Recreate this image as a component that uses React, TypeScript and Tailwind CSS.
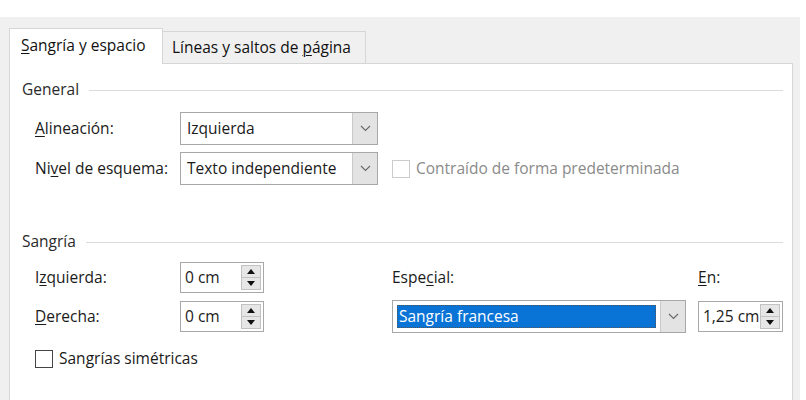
import React from "react";

// Small accelerator-key underline, like Win32 dialogs
const U = ({ children }: { children: React.ReactNode }) => (
  <span className="underline decoration-1 underline-offset-[2px]">{children}</span>
);

const Chevron = () => (
  <svg width="11" height="7" viewBox="0 0 11 7" fill="none">
    <path d="M1 1l4.5 4.5L10 1" stroke="#6b6b6b" strokeWidth="1.2" />
  </svg>
);

const SectionHeader = ({ title }: { title: string }) => (
  <div className="flex h-[20px] items-center">
    <span className="text-[#2a2a2a]">{title}</span>
    <div className="ml-[10px] h-px flex-1 bg-[#dcdcdc]" />
  </div>
);

interface SelectProps {
  value: string;
  width: string;
  highlighted?: boolean;
}

const Select: React.FC<SelectProps> = ({ value, width, highlighted }) => (
  <div
    className={`flex h-[33px] ${width} items-stretch border border-[#a8a8a8] bg-white`}
  >
    <div className="flex flex-1 items-center p-[4px]">
      {highlighted ? (
        <div className="flex h-full w-full items-center bg-[#0a74d6] pl-[2px] text-white outline-1 outline-dotted outline-[#555] -outline-offset-1">
          {value}
        </div>
      ) : (
        <span className="pl-[2px] text-[#1a1a1a]">{value}</span>
      )}
    </div>
    <div className="flex w-[25px] items-center justify-center border-l border-[#c9c9c9] bg-[#e3e3e3]">
      <Chevron />
    </div>
  </div>
);

const SpinBox = ({ value, width }: { value: string; width: string }) => (
  <div className={`flex h-[31px] ${width} items-center border border-[#a8a8a8] bg-white pl-[4px] pr-[2px]`}>
    <span className="flex-1 whitespace-nowrap text-[#1a1a1a]">{value}</span>
    <div className="flex h-[25px] w-[20px] shrink-0 flex-col border border-[#c2c2c2] bg-[#e6e6e6]">
      <div className="flex flex-1 items-center justify-center border-b border-[#c2c2c2]">
        <svg width="8" height="5" viewBox="0 0 8 5">
          <path d="M0 5L4 0l4 5z" fill="#111" />
        </svg>
      </div>
      <div className="flex flex-1 items-center justify-center">
        <svg width="8" height="5" viewBox="0 0 8 5">
          <path d="M0 0l4 5 4-5z" fill="#111" />
        </svg>
      </div>
    </div>
  </div>
);

const Checkbox = ({ disabled }: { disabled?: boolean }) => (
  <div
    className={`h-[18px] w-[18px] shrink-0 border bg-white ${
      disabled ? "border-[#cccccc]" : "border-[#444]"
    }`}
  />
);

export default function App() {
  return (
    <div className="h-[400px] w-[806px] overflow-hidden bg-white pt-[17px] font-['Open_Sans',sans-serif] text-[15.5px] leading-none">
      <div className="h-[400px] w-[800px] bg-[#f0f0f0] pl-[9px] pr-[7px] pt-[11px]">
        {/* Tabs */}
        <div className="relative z-10 flex items-end">
          <div className="-mb-px flex h-[36px] w-[154px] items-center border border-b-0 border-[#d6d6d6] bg-white pb-[2px] pl-[11px] text-[#111]">
            <span className="whitespace-nowrap">
              <U>S</U>angría y espacio
            </span>
          </div>
          <div className="flex h-[32px] w-[203px] items-center border border-l-0 border-b-0 border-[#d6d6d6] bg-[#f0f0f0] pl-[9px] text-[#111]">
            <span className="whitespace-nowrap">
              Líneas y saltos de <U>p</U>ágina
            </span>
          </div>
        </div>

        {/* Panel */}
        <div className="h-[360px] w-[784px] border border-[#d6d6d6] bg-white pl-[12px] pr-[9px] pt-[16px]">
          <SectionHeader title="General" />
          <div className="mt-[12px] flex flex-col gap-[7px] pl-[13px]">
            <div className="flex items-center">
              <span className="w-[145px] text-[#1a1a1a]">
                <U>A</U>lineación:
              </span>
              <Select value="Izquierda" width="w-[198px]" />
            </div>
            <div className="flex items-center">
              <span className="w-[145px] whitespace-nowrap text-[#1a1a1a]">
                Ni<U>v</U>el de esquema:
              </span>
              <Select value="Texto independiente" width="w-[198px]" />
              <div className="ml-[14px] flex items-center gap-[6px] whitespace-nowrap text-[#8a8a8a]">
                <Checkbox disabled />
                <span>Contraído de forma predeterminada</span>
              </div>
            </div>
          </div>

          <div className="mt-[47px]">
            <SectionHeader title="Sangría" />
          </div>
          <div className="mt-[10px] grid grid-cols-[145px_84px_128px_294px_12px_85px] grid-rows-[31px_31px] items-center gap-y-[8px] pl-[13px] text-[#1a1a1a]">
            <span>
              I<U>z</U>quierda:
            </span>
            <SpinBox value="0 cm" width="w-[84px]" />
            <span />
            <span>
              Espe<U>c</U>ial:
            </span>
            <span />
            <span>
              <U>E</U>n:
            </span>

            <span>
              <U>D</U>erecha:
            </span>
            <SpinBox value="0 cm" width="w-[84px]" />
            <span />
            <Select value="Sangría francesa" width="w-[294px]" highlighted />
            <span />
            <SpinBox value="1,25 cm" width="w-[85px]" />
          </div>

          <div className="mt-[18px] flex items-center gap-[6px] pl-[13px] text-[#1a1a1a]">
            <Checkbox />
            <span>
              San<U>g</U>rías simétricas
            </span>
          </div>
        </div>
      </div>
    </div>
  );
}
